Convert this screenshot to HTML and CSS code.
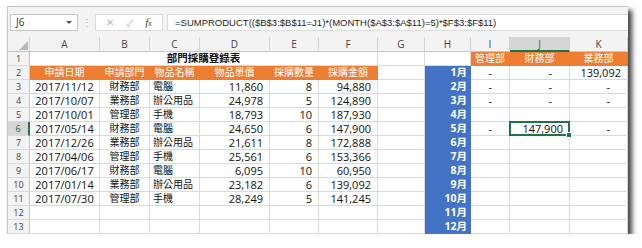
FILE: index.html
```html
<!DOCTYPE html>
<html>
    <head>
        <meta charset="UTF-8">
        <title>部門採購登錄表</title>
        <link rel="stylesheet" href="styles.css">
    </head>
    <body>
        <div class="window">
            <div class="formulaBar">
                <div class="nameBox"><span>J6</span><span class="drop"></span></div>
                <div class="grip">⋮</div>
                <div class="fxBox">
                    <span class="btn">✕</span>
                    <span class="btn">✓</span>
                    <span class="fx">f<small>x</small></span>
                </div>
                <div class="formula">=SUMPRODUCT(($B$3:$B$11=J1)*(MONTH($A$3:$A$11)=5)*$F$3:$F$11)</div>
            </div>

            <div class="sheet">
                <!-- column headers -->
                <div class="corner"><svg width="22" height="15" viewBox="0 0 22 15"><polygon points="11,13 20,13 20,4" fill="#b9b9b9"/></svg></div>
                <div class="hd">A</div><div class="hd">B</div><div class="hd">C</div><div class="hd">D</div><div class="hd">E</div><div class="hd">F</div><div class="hd">G</div><div class="hd">H</div><div class="hd">I</div><div class="hd sel">J</div><div class="hd">K</div>

                <!-- row 1 -->
                <div class="rh">1</div>
                <div class="c title">部門採購登錄表</div>
                <div class="c"></div><div class="c"></div>
                <div class="c o zh">管理部</div><div class="c o zh">財務部</div><div class="c o zh">業務部</div>

                <!-- row 2 -->
                <div class="rh">2</div>
                <div class="c o zh">申請日期</div><div class="c o zh">申請部門</div><div class="c o zh">物品名稱</div><div class="c o zh">物品單價</div><div class="c o zh">採購數量</div><div class="c o zh">採購金額</div>
                <div class="c"></div><div class="c b">1月</div>
                <div class="c acc">-</div><div class="c acc">-</div><div class="c r">139,092</div>

                <!-- row 3 -->
                <div class="rh">3</div>
                <div class="c m">2017/11/12</div><div class="c m zh">財務部</div><div class="c zh">電腦</div><div class="c r">11,860</div><div class="c r">8</div><div class="c r">94,880</div>
                <div class="c"></div><div class="c b">2月</div>
                <div class="c acc">-</div><div class="c acc">-</div><div class="c acc">-</div>

                <!-- row 4 -->
                <div class="rh">4</div>
                <div class="c m">2017/10/07</div><div class="c m zh">業務部</div><div class="c zh">辦公用品</div><div class="c r">24,978</div><div class="c r">5</div><div class="c r">124,890</div>
                <div class="c"></div><div class="c b">3月</div>
                <div class="c acc">-</div><div class="c acc">-</div><div class="c acc">-</div>

                <!-- row 5 -->
                <div class="rh">5</div>
                <div class="c m">2017/10/01</div><div class="c m zh">管理部</div><div class="c zh">手機</div><div class="c r">18,793</div><div class="c r">10</div><div class="c r">187,930</div>
                <div class="c"></div><div class="c b">4月</div>
                <div class="c"></div><div class="c"></div><div class="c"></div>

                <!-- row 6 -->
                <div class="rh sel">6</div>
                <div class="c m">2017/05/14</div><div class="c m zh">財務部</div><div class="c zh">電腦</div><div class="c r">24,650</div><div class="c r">6</div><div class="c r">147,900</div>
                <div class="c"></div><div class="c b">5月</div>
                <div class="c acc">-</div><div class="c r active">147,900</div><div class="c acc">-</div>

                <!-- row 7 -->
                <div class="rh">7</div>
                <div class="c m">2017/12/26</div><div class="c m zh">業務部</div><div class="c zh">辦公用品</div><div class="c r">21,611</div><div class="c r">8</div><div class="c r">172,888</div>
                <div class="c"></div><div class="c b">6月</div>
                <div class="c"></div><div class="c"></div><div class="c"></div>

                <!-- row 8 -->
                <div class="rh">8</div>
                <div class="c m">2017/04/06</div><div class="c m zh">管理部</div><div class="c zh">手機</div><div class="c r">25,561</div><div class="c r">6</div><div class="c r">153,366</div>
                <div class="c"></div><div class="c b">7月</div>
                <div class="c"></div><div class="c"></div><div class="c"></div>

                <!-- row 9 -->
                <div class="rh">9</div>
                <div class="c m">2017/06/17</div><div class="c m zh">財務部</div><div class="c zh">電腦</div><div class="c r">6,095</div><div class="c r">10</div><div class="c r">60,950</div>
                <div class="c"></div><div class="c b">8月</div>
                <div class="c"></div><div class="c"></div><div class="c"></div>

                <!-- row 10 -->
                <div class="rh">10</div>
                <div class="c m">2017/01/14</div><div class="c m zh">業務部</div><div class="c zh">辦公用品</div><div class="c r">23,182</div><div class="c r">6</div><div class="c r">139,092</div>
                <div class="c"></div><div class="c b">9月</div>
                <div class="c"></div><div class="c"></div><div class="c"></div>

                <!-- row 11 -->
                <div class="rh">11</div>
                <div class="c m">2017/07/30</div><div class="c m zh">管理部</div><div class="c zh">手機</div><div class="c r">28,249</div><div class="c r">5</div><div class="c r">141,245</div>
                <div class="c"></div><div class="c b">10月</div>
                <div class="c"></div><div class="c"></div><div class="c"></div>

                <!-- row 12 -->
                <div class="rh">12</div>
                <div class="c"></div><div class="c"></div><div class="c"></div><div class="c"></div><div class="c"></div><div class="c"></div>
                <div class="c"></div><div class="c b">11月</div>
                <div class="c"></div><div class="c"></div><div class="c"></div>

                <!-- row 13 -->
                <div class="rh">13</div>
                <div class="c"></div><div class="c"></div><div class="c"></div><div class="c"></div><div class="c"></div><div class="c"></div>
                <div class="c"></div><div class="c b">12月</div>
                <div class="c"></div><div class="c"></div><div class="c"></div>
            </div>
        </div>
    </body>
</html>
```

FILE: styles.css
```css
html, body {
    margin: 0px;
    padding: 0px;
    background-color: #fff;
}

.window {
    margin: 6px 0px 0px 7px;
    width: 621px;
    height: 228px;
    box-sizing: border-box;
    border-top: 1px solid #c8c8c8;
    border-left: 1px solid #c8c8c8;
    background-color: #f3f3f3;
    box-shadow: 4px 4px 5px rgba(0, 0, 0, 0.75);
    font-family: "Open Sans", "Noto Sans CJK TC", sans-serif;
    overflow: hidden;
}

/* formula bar */

.formulaBar {
    display: flex;
    align-items: center;
    height: 30px;
    padding-left: 2px;
}

.nameBox {
    display: flex;
    align-items: center;
    justify-content: space-between;
    box-sizing: border-box;
    width: 68px;
    height: 17px;
    padding: 0px 5px 0px 5px;
    background-color: #fff;
    border: 1px solid #c6c6c6;
    font-size: 10px;
    color: #333;
}

.drop {
    width: 0px;
    height: 0px;
    border-left: 3px solid transparent;
    border-right: 3px solid transparent;
    border-top: 3px solid #555;
}

.grip {
    width: 17px;
    text-align: center;
    font-size: 10px;
    color: #b0b0b0;
}

.fxBox {
    display: flex;
    align-items: center;
    justify-content: space-around;
    box-sizing: border-box;
    width: 68px;
    height: 17px;
    padding: 0px 4px;
    background-color: #fff;
    border: 1px solid #dcdcdc;
    font-size: 10px;
}

.btn {
    color: #b5b5b5;
}

.fx {
    font-family: "Liberation Serif", serif;
    font-style: italic;
    font-size: 11px;
    color: #444;
}

.fx small {
    font-size: 8px;
}

.formula {
    flex: 1;
    box-sizing: border-box;
    height: 17px;
    margin-left: 4px;
    padding-left: 7px;
    background-color: #fff;
    border: 1px solid #dcdcdc;
    border-right: none;
    font-family: "Liberation Sans", Arial, sans-serif;
    font-size: 9.5px;
    line-height: 15px;
    color: #222;
    white-space: nowrap;
    overflow: hidden;
}

/* grid */

.sheet {
    display: grid;
    grid-template-columns: 22px 70px 50px 50px 70px 49px 59px 47px 46px 39px 60px 58px;
    grid-template-rows: 15px repeat(13, 14px);
    background-color: #fff;
    font-size: 11px;
    color: #111;
}

.corner {
    background-color: #f3f3f3;
    border-right: 1px solid #d5d5d5;
    border-bottom: 1px solid #c6c6c6;
    box-sizing: border-box;
    line-height: 0px;
}

.hd {
    box-sizing: border-box;
    background-color: #f3f3f3;
    border-right: 1px solid #d5d5d5;
    border-bottom: 1px solid #c6c6c6;
    text-align: center;
    font-size: 10px;
    line-height: 14px;
    color: #444;
}

.hd.sel {
    background-color: #d6d6d6;
    border-bottom: 2px solid #217346;
    color: #217346;
}

.rh {
    box-sizing: border-box;
    background-color: #f3f3f3;
    border-right: 1px solid #c6c6c6;
    border-bottom: 1px solid #dadada;
    text-align: center;
    font-size: 9px;
    line-height: 13px;
    color: #444;
}

.rh.sel {
    background-color: #d6d6d6;
    border-right: 2px solid #217346;
    color: #217346;
}

.c {
    position: relative;
    box-sizing: border-box;
    padding: 0px 3px;
    border-right: 1px solid #dadada;
    border-bottom: 1px solid #dadada;
    line-height: 13px;
    white-space: nowrap;
}

.zh {
    font-size: 10px;
}

.m {
    text-align: center;
}

.r {
    text-align: right;
    padding-right: 6px;
}

.acc {
    text-align: right;
    padding-right: 17px;
}

.title {
    grid-column: span 6;
    text-align: center;
    font-size: 10.5px;
    font-weight: bold;
}

.o {
    background-color: #ed7d31;
    border-color: #ed7d31;
    color: #fff;
    text-align: center;
}

.b {
    background-color: #4472c4;
    border-color: #4472c4;
    color: #fff;
    font-weight: bold;
    font-size: 10.5px;
    text-align: right;
    padding-right: 3px;
}

/* selected cell */

.active::after {
    content: "";
    position: absolute;
    top: -1px;
    left: -1px;
    right: -1px;
    bottom: -1px;
    border: 2px solid #217346;
}

.active::before {
    content: "";
    position: absolute;
    right: -3px;
    bottom: -3px;
    width: 4px;
    height: 4px;
    background-color: #217346;
    border: 1px solid #fff;
    z-index: 2;
}
```
